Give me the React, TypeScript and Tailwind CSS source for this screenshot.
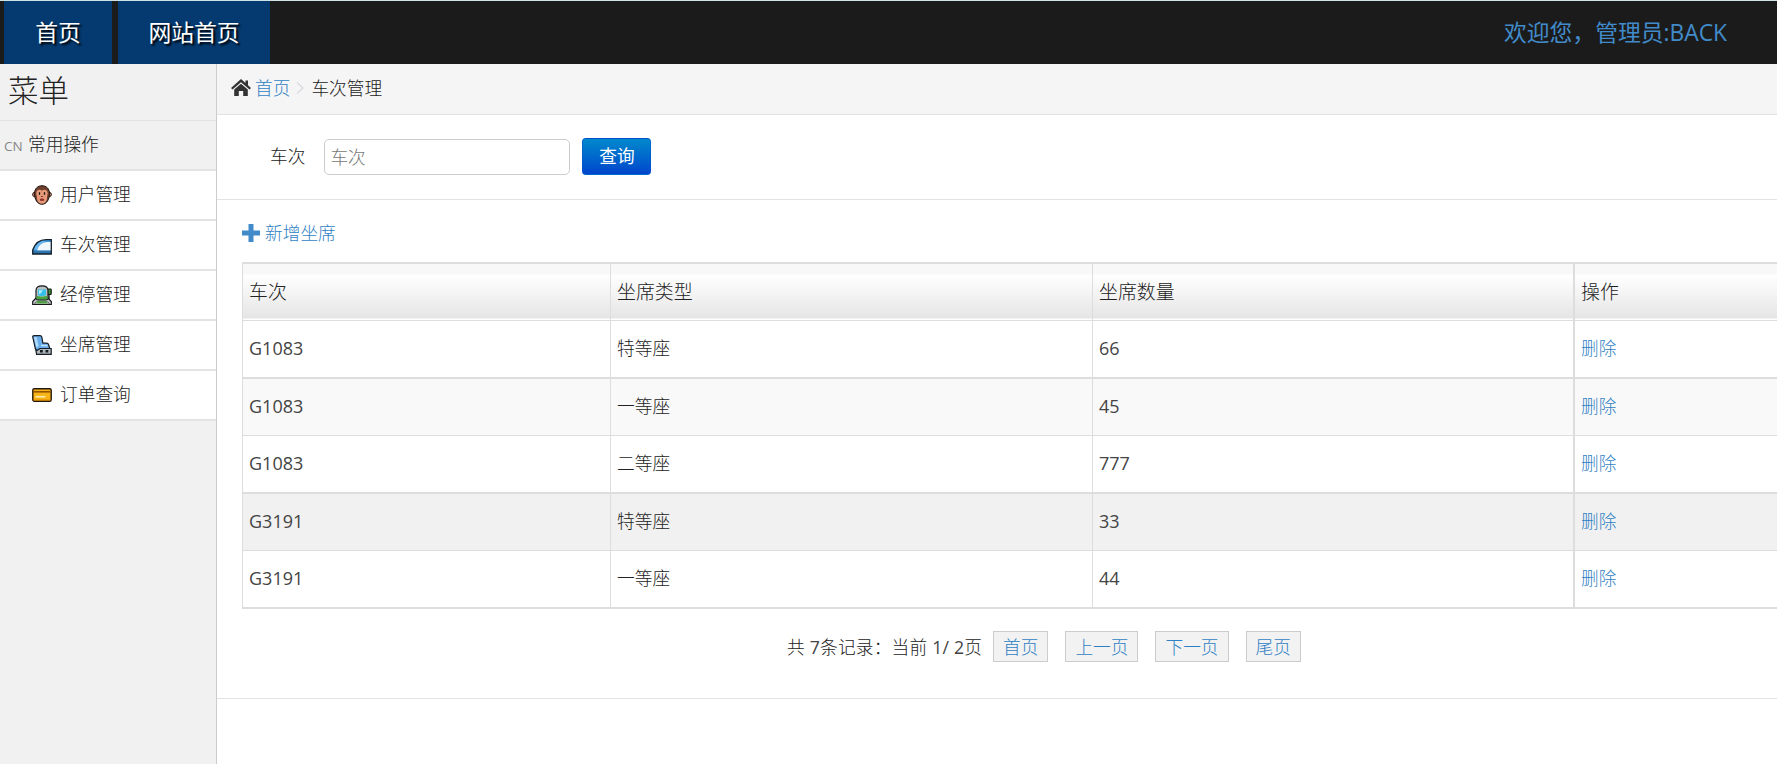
import type { ReactNode } from 'react';

interface Seat {
  id: number;
  train: string;
  type: string;
  count: number;
  className: string;
}

const seats: Seat[] = [
  { id: 1, train: 'G1083', type: '特等座', count: 66, className: 'h-[58px] border-b-2' },
  { id: 2, train: 'G1083', type: '一等座', count: 45, className: 'h-[57px] border-b bg-[#f9f9f9]' },
  { id: 3, train: 'G1083', type: '二等座', count: 777, className: 'h-[58px] border-b-2' },
  { id: 4, train: 'G3191', type: '特等座', count: 33, className: 'h-[57px] border-b bg-[#f1f1f1]' },
  { id: 5, train: 'G3191', type: '一等座', count: 44, className: 'h-[58px] border-b-2' },
];

const MonkeyIcon = () => (
  <svg width="20" height="20" viewBox="0 0 20 20">
    <circle cx="2.8" cy="9.5" r="2.2" fill="#d98c6c" stroke="#2a1a14" />
    <circle cx="17.2" cy="9.5" r="2.2" fill="#d98c6c" stroke="#2a1a14" />
    <path d="M10 .7C5.500.7 2.500 4 2.500 8.500c0 6 3 10.800 7.500 10.800s7.500-4.800 7.500-10.800C17.500 4 14.500.7 10 .7Z" fill="#6e3f2c" stroke="#1d120e" />
    <path d="M10 5.800C8.500 4 4.300 4.500 4.300 8.300c0 1.500.7 2.700.7 4.700 0 3 2 5.700 5 5.700s5-2.700 5-5.700c0-2 .7-3.200.7-4.700 0-3.800-4.200-4.300-5.700-2.500Z" fill="#e69a7a" />
    <path d="M7.500 7.300v2.500M12.500 7.300v2.500" stroke="#111" strokeWidth="1.300" />
    <path d="M9 11.500h2" stroke="#7a3b2a" />
    <ellipse cx="10" cy="14.800" rx="2.300" ry="1.200" fill="#8d2f2a" />
  </svg>
);

const BulletTrainIcon = () => (
  <svg width="20" height="20" viewBox="0 0 20 20">
    <path d="M19.300 4.700V19H.7v-4C3 8.500 8 4.700 14 4.700Z" fill="#3d97dc" />
    <path d="M19.300 7V15.500H5C6 11 10 7 15 7Z" fill="#f1f8fd" />
    <path d="M11 6C6.500 7.500 3.500 10.500 2 14.500h3C6.500 10.500 9 8 13.500 6.500Z" fill="#6fb9ee" />
    <path d="M1 15.700h18V19H1Z" fill="#2f74ac" />
    <path d="M19.300 4.700V19H.7v-4C3 8.500 8 4.700 14 4.700Z" fill="none" stroke="#15202b" strokeWidth="1.300" />
  </svg>
);

const StationIcon = () => (
  <svg width="20" height="20" viewBox="0 0 20 20">
    <path d="M5 12 .7 16.500v3h18.600v-3L15 12Z" fill="#c3c7c8" stroke="#16191b" strokeWidth="1.200" />
    <path d="M17 9.500V14" stroke="#16191b" strokeWidth="1.300" />
    <rect x="15" y="4" width="4.200" height="5.500" rx=".8" fill="#3f8f35" stroke="#16191b" strokeWidth="1.200" />
    <path d="M4 5.500C4 2 7 .8 10 .8S16 2 16 5.500V13c0 1-.8 1.800-1.500 1.800h-9C4.700 14.800 4 14 4 13Z" fill="#b9c0c2" stroke="#16191b" strokeWidth="1.200" />
    <path d="M6 4.500h8V10c-2 1.500-6 1.500-8 0Z" fill="#35c0ea" />
    <path d="M7 5.200h4L8 9H7Z" fill="#b4ecfb" />
    <path d="M4.600 10.500C7 12 13 12 15.400 10.500v3.800H4.600Z" fill="#47a43c" />
    <path d="M5.500 16h9l1.300 2.600H4.200Z" fill="#4d9f42" />
    <path d="m4.500 16.500-2 2.500M15.500 16.500l2 2.500" stroke="#555" />
  </svg>
);

const SeatIcon = () => (
  <svg width="20" height="20" viewBox="0 0 20 20">
    <path d="M3.600 13.500h15.600v5.800H4.600Z" fill="#aeb6ba" stroke="#151c22" strokeWidth="1.200" />
    <path d="M.7 1.800C.7 1 1.200.7 2 .7h6c1 0 1.600.5 1.800 1.500l1.100 6h3.600c1.200 0 1.800.4 2 1.300l1.300 4H8L5 15.500 3.400 14Z" fill="#69aeea" stroke="#151c22" strokeWidth="1.200" />
    <path d="M2 2h2.500l2.100 9-2.200 1.500Z" fill="#b3dafa" />
    <path d="M9 10.500h6.500" stroke="#c6e5fb" strokeWidth="1.300" />
    <path d="M8 15h2.800v2.500H8zM13.500 15h2.800v2.500h-2.800z" fill="#151c22" />
  </svg>
);

const CardIcon = () => (
  <svg width="20" height="20" viewBox="0 0 20 20">
    <rect x=".8" y="3.700" width="18.400" height="12.600" rx="1.500" fill="#f8b416" stroke="#24190a" strokeWidth="1.400" />
    <path d="M1.500 6.800h17" stroke="#8f5200" strokeWidth="1.600" />
    <path d="M3.500 11.700h10" stroke="#ffeeb0" strokeWidth="1.600" />
    <path d="M1.500 15h17" stroke="#e08a00" />
  </svg>
);

const menu: { label: string; icon: ReactNode }[] = [
  { label: '用户管理', icon: <MonkeyIcon /> },
  { label: '车次管理', icon: <BulletTrainIcon /> },
  { label: '经停管理', icon: <StationIcon /> },
  { label: '坐席管理', icon: <SeatIcon /> },
  { label: '订单查询', icon: <CardIcon /> },
];

const columns = 'grid grid-cols-[368px_482px_481px_1fr] border-[#ddd]';

function Cell({ children, last }: { children: ReactNode; last?: boolean }) {
  return (
    <div className={`flex items-center border-[#ddd] pl-[6px] ${last ? 'border-l-2' : 'border-l'}`}>
      {children}
    </div>
  );
}

export default function App() {
  return (
    <div className="flex h-[764px] w-full flex-col overflow-hidden bg-white font-['Open_Sans','Noto_Sans_CJK_SC',sans-serif] text-[17.7px] leading-[25px] font-light text-[#222]">
      {/* Top bar */}
      <header className="flex h-16 shrink-0 items-stretch justify-between border-t border-[#cfe3e6] bg-[#1b1b1b] pl-1 text-[22.8px] font-normal">
        <nav className="flex gap-[6px] text-white [text-shadow:2px_2px_2px_#000]">
          <a className="flex w-[108px] items-center justify-center bg-[#043a70]">首页</a>
          <a className="flex w-[152px] items-center justify-center bg-[#043a70]">网站首页</a>
        </nav>
        <div className="flex items-center pr-[50px] text-[#428bca]">欢迎您，管理员:BACK</div>
      </header>

      <div className="flex min-h-0 flex-1">
        {/* Sidebar */}
        <aside className="w-[217px] shrink-0 border-r border-[#ccc] bg-[#f1f1f1]">
          <h3 className="flex h-[57px] items-center border-b border-[#e3e3e3] pb-[3px] pl-2 text-[30.5px]">菜单</h3>
          <div className="flex h-[50px] items-center border-b-2 border-[#e3e3e3] pb-[2px] pl-1">
            <span className="w-[24px] pt-[5px] text-[13.5px] font-normal text-[#888]">CN</span>
            常用操作
          </div>
          <ul>
            {menu.map((item) => (
              <li key={item.label} className="flex h-[50px] items-center gap-2 border-b-2 border-[#e3e3e3] bg-white pb-[2px] pl-8">
                <span className="pt-[2px]">{item.icon}</span>
                {item.label}
              </li>
            ))}
          </ul>
        </aside>

        <main className="min-w-0 flex-1 overflow-hidden">
          {/* Breadcrumb */}
          <div className="flex h-[51px] items-center border-b border-[#e3e3e3] bg-[#f5f5f5] pb-[2px] pl-[14px]">
            <svg width="20" height="18" viewBox="0 0 20 18" fill="#333">
              <path d="M10 0 0 9l1.500 1.500L10 3.200l8.500 7.300L20 9l-3-2.700V1.500h-2.500V4Z" />
              <path d="M10 4.800 3.200 10.600V17h4.600v-5h4.400v5h4.600v-6.400Z" />
            </svg>
            <a className="ml-1 text-[#2f7fc4]">首页</a>
            <svg className="mx-[6px]" width="9" height="14" viewBox="0 0 9 14" fill="none" stroke="#c5c9d0">
              <path d="M1 1.500 7 7l-6 5.500" />
            </svg>
            <span>车次管理</span>
          </div>

          {/* Search form */}
          <div className="flex h-[85px] items-center border-b border-[#e3e3e3] pb-px pl-[53px]">
            <label>车次</label>
            <input
              className="ml-[19px] h-9 w-[246px] rounded-[5px] border border-[#ccc] px-[5px] placeholder:text-[#777]"
              placeholder="车次"
            />
            <button className="ml-3 h-[37px] w-[69px] rounded-[4px] border border-[#0055cc]/60 bg-linear-to-b from-[#0088cc] to-[#0044cc] font-normal text-white">
              查询
            </button>
          </div>

          <div className="h-[499px] border-b border-[#e3e3e3] pl-[25px]">
            <a className="flex h-[62px] items-center gap-1 pt-[3px] text-[#2f7fc4]">
              <svg width="19" height="18" viewBox="0 0 19 18" fill="#428bca">
                <path d="M6.500 0h5v6.500H18v5h-6.500V18h-5v-6.500H0v-5h6.500Z" />
              </svg>
              <span className="pt-[2px]">新增坐席</span>
            </a>

            {/* Seat table */}
            <div className="w-[1600px] border-t-2 border-[#ddd]">
              <div className={`${columns} h-[57px] border-b bg-[linear-gradient(to_bottom,#f8f8f8_10px,#ffffff_11px,#e5e5e5_54px,#ffffff_55px)] text-[18.9px]`}>
                <Cell>
                  <span className="pt-px">车次</span>
                </Cell>
                <Cell>
                  <span className="pt-px">坐席类型</span>
                </Cell>
                <Cell>
                  <span className="pt-px">坐席数量</span>
                </Cell>
                <Cell last>
                  <span className="pt-px">操作</span>
                </Cell>
              </div>
              {seats.map((seat) => (
                <div key={seat.id} className={`${columns} ${seat.className}`}>
                  <Cell>
                    <span className="mb-[2px] text-[18px] font-normal text-[#444]">{seat.train}</span>
                  </Cell>
                  <Cell>
                    <span className="mb-[2px]">{seat.type}</span>
                  </Cell>
                  <Cell>
                    <span className="mb-[2px] text-[18px] font-normal text-[#444]">{seat.count}</span>
                  </Cell>
                  <Cell last>
                    <a className="mb-[2px] text-[#2f7fc4]">删除</a>
                  </Cell>
                </div>
              ))}
            </div>

            {/* Pagination */}
            <div className="flex items-center pt-[22px] pl-[545px]">
              <span className="w-[206px] pt-[2px] tracking-[0.2px] whitespace-pre">
                共 <span className="font-normal text-[#444]">7</span>条记录：当前 <span className="font-normal text-[#444]">1/ 2</span>页
              </span>
              <div className="flex gap-[17px] text-[#2f7fc4]">
                {['首页', '上一页', '下一页', '尾页'].map((label) => (
                  <a key={label} className="flex h-[31px] items-center border border-[#ccc] bg-[#f2f2f2] px-[9px] pt-[2px]">
                    {label}
                  </a>
                ))}
              </div>
            </div>
          </div>
        </main>
      </div>
    </div>
  );
}
